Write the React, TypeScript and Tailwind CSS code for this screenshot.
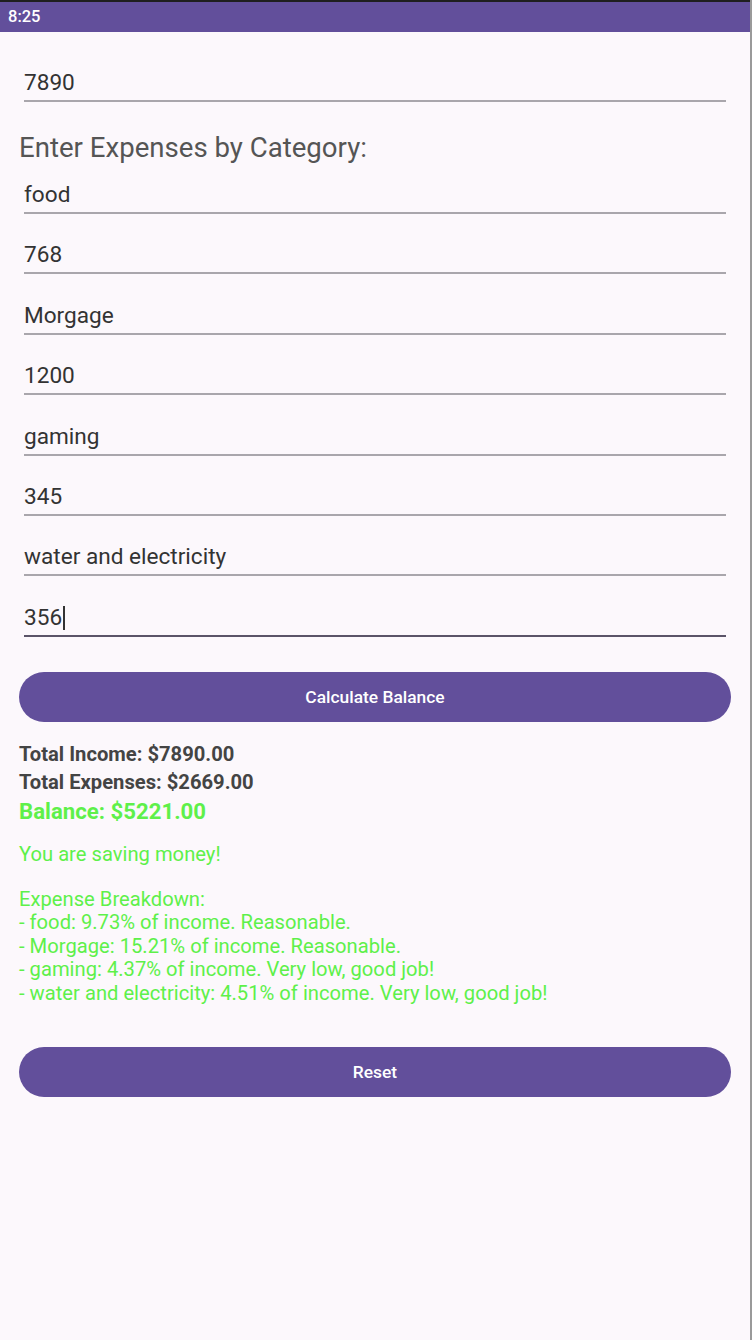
import React from "react";

const font = { fontFamily: "Roboto, 'Noto Sans', 'Liberation Sans', sans-serif" };

function Field({ value, first, focused }: { value: string; first?: boolean; focused?: boolean }) {
  return (
    <div
      className={`ml-[24px] mr-[26px] ${first ? "" : "mt-[29.4px]"} pb-[5px] border-b-2 ${
        focused ? "border-[#5b5468]" : "border-[#a9a6ac]"
      } flex items-end`}
    >
      <span className="text-[22.6px] leading-[24px] text-[#333333]">{value}</span>
      {focused && <span className="inline-block w-[2px] h-[24px] bg-[#333333] ml-[1px]" />}
    </div>
  );
}

export default function App() {
  return (
    <div className="w-[752px] h-[1340px] bg-[#fcf8fc] relative overflow-hidden" style={font}>
      <div className="h-[2px] bg-[#1f1f1f]" />
      <div className="h-[30px] bg-[#624f9b] flex items-center px-[8px]">
        <span className="text-white text-[16.5px] leading-none font-medium">8:25</span>
      </div>
      <div className="mt-[39px]">
        <Field value="7890" first />
      </div>
      <div className="ml-[19px] mt-[32px] text-[27.6px] leading-[28px] text-[#555555]">
        Enter Expenses by Category:
      </div>
      <div className="mt-[21px]">
        <Field value="food" first />
        <Field value="768" />
        <Field value="Morgage" />
        <Field value="1200" />
        <Field value="gaming" />
        <Field value="345" />
        <Field value="water and electricity" />
        <Field value="356" focused />
      </div>
      <button className="ml-[19px] mr-[21px] mt-[35px] w-[712px] h-[50px] rounded-full bg-[#624f9b] text-white text-[17.4px] font-medium flex items-center justify-center">
        Calculate Balance
      </button>
      <div className="ml-[19px] mt-[18px]">
        <div className="text-[20.2px] leading-[28px] font-bold text-[#444444]">Total Income: $7890.00</div>
        <div className="text-[20.2px] leading-[28px] font-bold text-[#444444]">Total Expenses: $2669.00</div>
        <div className="text-[22.2px] leading-[30px] font-bold text-[#5ef04a]">Balance: $5221.00</div>
        <div className="mt-[16px] text-[20.2px] leading-[24px] text-[#5ef04a]">You are saving money!</div>
        <div className="mt-[22px] text-[20.2px] leading-[23.5px] text-[#5ef04a]">
          <div>Expense Breakdown:</div>
          <div>- food: 9.73% of income. Reasonable.</div>
          <div>- Morgage: 15.21% of income. Reasonable.</div>
          <div>- gaming: 4.37% of income. Very low, good job!</div>
          <div>- water and electricity: 4.51% of income. Very low, good job!</div>
        </div>
      </div>
      <button className="ml-[19px] mt-[42px] w-[712px] h-[50px] rounded-full bg-[#624f9b] text-white text-[17.4px] font-medium flex items-center justify-center">
        Reset
      </button>
      <div className="absolute top-0 right-0 w-[2px] h-full bg-[#9a9a9a]" />
    </div>
  );
}
